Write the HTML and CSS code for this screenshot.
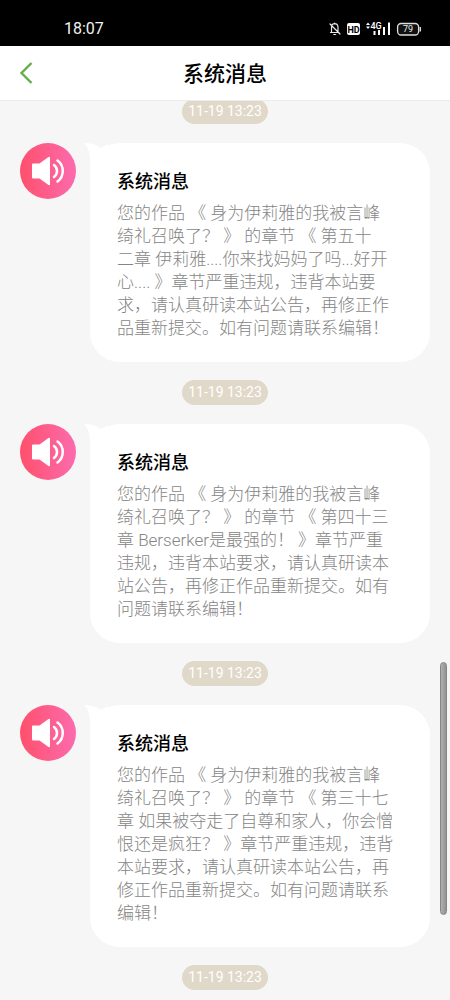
FILE: index.html
```html
<!DOCTYPE html>
<html lang="zh-CN">
<head>
<meta charset="utf-8">
<meta name="viewport" content="width=device-width, initial-scale=1">
<title>系统消息</title>
<link rel="stylesheet" href="styles.css">
</head>
<body>
<svg class="defs" aria-hidden="true">
  <defs>
    <linearGradient id="pink" x1="0" y1="0" x2="1" y2="0">
      <stop offset="0" stop-color="#ff506c"/>
      <stop offset="1" stop-color="#fc6bae"/>
    </linearGradient>
    <symbol id="speaker" viewBox="0 0 56 56">
      <circle cx="28" cy="28" r="28" fill="url(#pink)"/>
      <path d="M13 20.500h6.500L28.500 14q1.500-1 1.500 1v26q0 2-1.500 1L19.500 35.500H13q-1 0-1-1v-13q0-1 1-1z" fill="#fff"/>
      <path d="M34 22c4 3 4 9 0 12M37.500 17.500c7 5 7 16 0 21" fill="none" stroke="#fff" stroke-width="2.500" stroke-linecap="round"/>
    </symbol>
    <symbol id="tail" viewBox="0 0 28 28">
      <path d="M0 0C5 0 12 1 17 5L24 1L28 28H6V18C6 10 4 4 0 0z" fill="#fff"/>
    </symbol>
  </defs>
</svg>
<div class="app">
  <div class="status">
    <span class="clock">18:07</span>
    <svg class="status-icons" viewBox="0 0 92 18" role="img" aria-label="静音，HD，4G，电量 79">
      <g fill="none" stroke="#e8e8e8" stroke-width="1.200" stroke-linecap="round">
        <path d="M0.500 12.500h8.500M1.500 12V7.500c0-5 6-5 6.500-.500V12M3.800 14.500h1.800M4.700 3V4M0 4l10 10"/>
      </g>
      <rect x="17" y="3" width="13" height="12" rx="2" fill="#fff"/>
      <text x="23.500" y="12.500" text-anchor="middle" class="hd">HD</text>
      <path d="M36 5l2-2.500L40 5zM36 6.500l2 2.500L40 6.500z" fill="#fff"/>
      <text x="40.500" y="8.500" class="net">4G</text>
      <path d="M44.500 15v-4M49 15v-5M54 15V7M59 15V2.500" stroke="#fff" stroke-width="2"/>
      <rect x="67.600" y="3.500" width="21" height="11.500" rx="3.500" fill="#111" stroke="#ddd" stroke-width="1.300"/>
      <path d="M90.300 7v4.500" stroke="#ddd" stroke-width="1.500"/>
      <text x="78" y="12.300" text-anchor="middle" class="pct">79</text>
    </svg>
  </div>
  <header class="header">
    <button class="back" type="button" aria-label="返回">
      <svg viewBox="0 0 14 24"><path d="M12.500 2L2.500 12l10 10" fill="none" stroke="#66ad4b" stroke-width="2.400"/></svg>
    </button>
    <h1 class="heading">系统消息</h1>
  </header>
  <main class="list">
    <time class="stamp">11-19 13:23</time>
    <article class="message">
      <svg class="avatar" aria-hidden="true"><use href="#speaker"/></svg>
      <div class="bubble">
        <svg class="tail" aria-hidden="true"><use href="#tail"/></svg>
        <h2 class="title">系统消息</h2>
        <p class="text">您的作品 《 身为伊莉雅的我被言峰<br>绮礼召唤了？ 》 的章节 《 第五十<br>二章 伊莉雅....你来找妈妈了吗...好开<br>心.... 》章节严重违规，违背本站要<br>求，请认真研读本站公告，再修正作<br>品重新提交。如有问题请联系编辑！</p>
      </div>
    </article>
    <time class="stamp">11-19 13:23</time>
    <article class="message">
      <svg class="avatar" aria-hidden="true"><use href="#speaker"/></svg>
      <div class="bubble">
        <svg class="tail" aria-hidden="true"><use href="#tail"/></svg>
        <h2 class="title">系统消息</h2>
        <p class="text">您的作品 《 身为伊莉雅的我被言峰<br>绮礼召唤了？ 》 的章节 《 第四十三<br>章 Berserker是最强的！ 》章节严重<br>违规，违背本站要求，请认真研读本<br>站公告，再修正作品重新提交。如有<br>问题请联系编辑！</p>
      </div>
    </article>
    <time class="stamp">11-19 13:23</time>
    <article class="message">
      <svg class="avatar" aria-hidden="true"><use href="#speaker"/></svg>
      <div class="bubble">
        <svg class="tail" aria-hidden="true"><use href="#tail"/></svg>
        <h2 class="title">系统消息</h2>
        <p class="text">您的作品 《 身为伊莉雅的我被言峰<br>绮礼召唤了？ 》 的章节 《 第三十七<br>章 如果被夺走了自尊和家人，你会憎<br>恨还是疯狂？ 》章节严重违规，违背<br>本站要求，请认真研读本站公告，再<br>修正作品重新提交。如有问题请联系<br>编辑！</p>
      </div>
    </article>
    <time class="stamp">11-19 13:23</time>
  </main>
  <div class="scrollbar" aria-hidden="true"></div>
</div>
</body>
</html>
```
FILE: styles.css
```css
* { box-sizing: border-box; }
body {
  margin: 0;
  background: #f6f6f6;
  font-family: Roboto, "Noto Sans CJK SC", sans-serif;
}
.defs { position: absolute; width: 0; height: 0; }
.app {
  position: relative;
  display: flex;
  flex-direction: column;
  height: 100vh;
  overflow: hidden;
}
.status {
  flex: none;
  display: flex;
  align-items: center;
  justify-content: space-between;
  height: 46px;
  padding: 12px 28px 0 64px;
  background: #000;
  color: #f2f2f2;
}
.clock { font-size: 16px; line-height: 20px; }
.status-icons { width: 92px; height: 18px; overflow: visible; }
.hd { font: 700 9px Roboto, sans-serif; fill: #000; }
.net { font: 500 9px Roboto, sans-serif; fill: #fff; }
.pct { font: 400 9px Roboto, sans-serif; fill: #eee; }
.header {
  flex: none;
  z-index: 1;
  display: grid;
  grid-template-columns: 52px 1fr 52px;
  align-items: center;
  height: 55px;
  background: #fff;
  border-bottom: 1px solid #ececec;
}
.back {
  display: flex;
  height: 48px;
  align-items: center;
  padding: 0 0 0 19px;
  border: 0;
  background: none;
}
.back svg { width: 14px; height: 24px; }
.heading {
  margin: 0;
  padding-top: 2px;
  font-size: 21px;
  line-height: 30px;
  font-weight: 500;
  text-align: center;
  color: #000;
}
.list {
  flex: 1;
  min-height: 0;
  display: flex;
  flex-direction: column;
  margin-top: -2px;
}
.stamp {
  flex: none;
  align-self: center;
  padding: 0 6px;
  border-radius: 13px;
  background: #e0d8c8;
  color: #fff;
  font-size: 14px;
  line-height: 25px;
}
.message {
  flex: none;
  display: flex;
  align-items: flex-start;
  gap: 14px;
  padding: 19px 20px 18px;
}
.avatar { flex: none; width: 56px; height: 56px; }
.bubble {
  position: relative;
  flex: 1;
  min-width: 0;
  padding: 27px 24px 22px 27px;
  border-radius: 30px;
  background: #fff;
}
.tail { position: absolute; top: 0; left: -6px; width: 28px; height: 28px; }
.title {
  position: relative;
  margin: 0 0 8px;
  font-size: 18px;
  line-height: 24px;
  font-weight: 500;
  color: #000;
}
.text {
  margin: 0;
  font-size: 17px;
  line-height: 23px;
  font-weight: 300;
  color: #858585;
}
.scrollbar {
  position: absolute;
  top: 66.2%;
  right: 3px;
  width: 7px;
  height: 25.3%;
  border: 1px solid #858585;
  border-radius: 4px;
  background: linear-gradient(90deg, #b0b0b0, #929292);
}
```
